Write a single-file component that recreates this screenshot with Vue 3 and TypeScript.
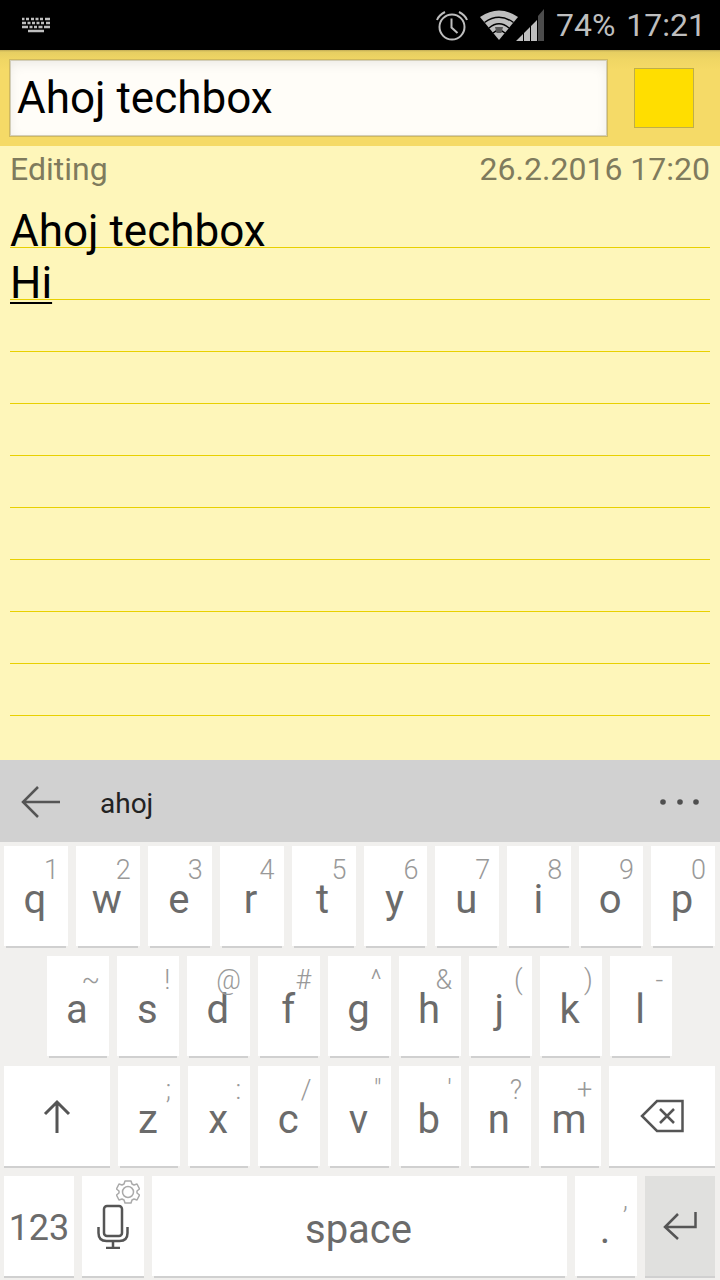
<script setup lang="ts">
import { ref } from 'vue'

interface Key {
  label: string
  hint: string
}

const toKeys = (letters: string, hints: string): Key[] =>
  [...letters].map((label, i) => ({ label, hint: hints[i] }))

const topRow = toKeys('qwertyuiop', '1234567890')
const homeRow = toKeys('asdfghjkl', '~!@#^&()-')
const lowRow = toKeys('zxcvbnm', ';:/"\'?+')

const title = ref('Ahoj techbox')
</script>

<template>
  <div class="screen">
    <header class="status">
      <svg class="status-keyboard" width="30" height="16" viewBox="0 0 30 16" aria-hidden="true">
        <g stroke="#bebebe" stroke-width="2.500">
          <path d="M1 2h2.500M5 2h3M10 2h3M14.500 2h3M19 2h3M24 2h5" />
          <path d="M1 6h4M6.500 6h3M11 6h3M15.500 6h3M20 6h3M25 6h4" />
          <path d="M1 10h6M8.500 10h3M13 10h3M17.500 10h4M23 10h6" />
          <path d="M7 14h16" />
        </g>
      </svg>
      <div class="status-right">
        <svg width="32" height="32" viewBox="0 0 32 32" fill="none" stroke="#bebebe" stroke-width="2" aria-hidden="true">
          <circle cx="16" cy="18" r="12.500" />
          <path d="M15.500 9.500v9l6 5.500M1 11Q3 6 9 3M31 11Q29 6 23 3" />
        </svg>
        <svg class="signal" width="66" height="32" viewBox="0 0 66 32" aria-hidden="true">
          <path d="M1 8Q20-5 39 8L20 31Z" fill="#bebebe" />
          <path d="M5.500 13.500Q20 3 34.500 13.500M10 19Q20 10.500 30 19M14 24Q20 18.500 26 24" fill="none" stroke="#000" stroke-width="1.500" />
          <path d="M16 18h8l-1.500 6h-5z" fill="#555" />
          <path d="M37 32l7-7v7zM45 24l6-6v14h-6zM52 17l6-6v21h-6z" fill="#bebebe" />
          <path d="M59 7l6-7v32h-6z" fill="#4c4c4c" />
        </svg>
        <span>74%</span>
        <time>17:21</time>
      </div>
    </header>

    <div class="title-bar">
      <input v-model="title" class="title" type="text" aria-label="Title" />
      <button class="swatch" type="button" aria-label="Note colour"></button>
    </div>

    <main class="note">
      <div class="meta">
        <span>Editing</span>
        <time>26.2.2016 17:20</time>
      </div>
      <div class="paper" contenteditable="true" role="textbox" aria-multiline="true" aria-label="Note text">
        <div>Ahoj techbox</div>
        <div><u>Hi</u></div>
      </div>
    </main>

    <section class="keyboard" aria-label="Keyboard">
      <div class="suggestions">
        <button type="button" class="plain" aria-label="Back">
          <svg width="42" height="32" viewBox="0 0 42 32" fill="none" stroke="#555" stroke-width="2.500" aria-hidden="true">
            <path d="M40 16H3M18 1L3 16l15 15" />
          </svg>
        </button>
        <button type="button" class="plain word">ahoj</button>
        <button type="button" class="plain more" aria-label="More">
          <svg width="40" height="6" viewBox="0 0 40 6" fill="#4f4f4f" aria-hidden="true">
            <circle cx="3" cy="3" r="2.800" /><circle cx="20" cy="3" r="2.800" /><circle cx="36" cy="3" r="2.800" />
          </svg>
        </button>
      </div>

      <div class="rows">
        <div class="row top">
          <button v-for="k in topRow" :key="k.label" type="button" class="key">
            <span class="hint">{{ k.hint }}</span>{{ k.label }}
          </button>
        </div>
        <div class="row home">
          <button v-for="k in homeRow" :key="k.label" type="button" class="key">
            <span class="hint">{{ k.hint }}</span>{{ k.label }}
          </button>
        </div>
        <div class="row low">
          <button type="button" class="key wide" aria-label="Shift">
            <svg width="28" height="34" viewBox="0 0 28 34" fill="none" stroke="#555" stroke-width="3" aria-hidden="true">
              <path d="M14 34V3M2 15L14 3l12 12" />
            </svg>
          </button>
          <button v-for="k in lowRow" :key="k.label" type="button" class="key">
            <span class="hint">{{ k.hint }}</span>{{ k.label }}
          </button>
          <button type="button" class="key wide" aria-label="Backspace">
            <svg width="44" height="34" viewBox="0 0 44 34" fill="none" stroke="#555" stroke-width="2.500" aria-hidden="true">
              <path d="M17 2h25.500v30H17L2 17zM20 10l14 14M34 10L20 24" />
            </svg>
          </button>
        </div>
        <div class="row bottom">
          <button type="button" class="key wide digits">123</button>
          <button type="button" class="key wide" aria-label="Voice input">
            <svg class="gear" width="24" height="24" viewBox="0 0 24 24" fill="none" stroke="#aaa" stroke-width="1.500" aria-hidden="true">
              <circle cx="12" cy="12" r="5.500" />
              <path d="M9 1h6l1 3 2 1 3-1 2.500 5-2.500 2v2l2.500 2-2.500 5-3-1-2 1-1 3H9l-1-3-2-1-3 1-2.500-5L3 13v-2L.5 9 3 4l3 1 2-1z" stroke-linejoin="round" />
            </svg>
            <svg width="32" height="46" viewBox="0 0 32 46" fill="none" stroke="#555" stroke-width="2.500" aria-hidden="true">
              <rect x="7" y="3" width="18" height="30" rx="3" />
              <path d="M1.500 24v6q0 8 8 8h13q8 0 8-8v-6M16 38v6M9 45h14" />
            </svg>
          </button>
          <button type="button" class="key space">space</button>
          <button type="button" class="key"><span class="hint">,</span>.</button>
          <button type="button" class="key wide enter" aria-label="Enter">
            <svg width="34" height="28" viewBox="0 0 34 28" fill="none" stroke="#555" stroke-width="2.500" aria-hidden="true">
              <path d="M32.500 0v15H2M15 2L2 15l13 12" />
            </svg>
          </button>
        </div>
      </div>
    </section>
  </div>
</template>

<style>
body {
  margin: 0;
  background: #f1f0ee;
}
</style>

<style scoped>
.screen {
  display: flex;
  flex-direction: column;
  min-height: 100vh;
  font-family: Roboto, "Noto Sans", sans-serif;
  color: #000;
}

.status {
  display: flex;
  justify-content: space-between;
  align-items: center;
  height: 50px;
  padding: 0 14px 0 21px;
  background: #000;
  color: #bebebe;
  font-size: 32px;
  line-height: 52px;
}

.status-right {
  display: flex;
  align-items: center;
  gap: 11px;
}

.title-bar {
  display: flex;
  align-items: center;
  gap: 26px;
  height: 96px;
  box-sizing: border-box;
  padding: 0 26px 0 9px;
  background: linear-gradient(#bfa955, #e6ce62 2px, #f0d664 10px, #f5da67 20px);
}

.title {
  flex: 1;
  min-width: 0;
  height: 78px;
  box-sizing: border-box;
  padding: 0 7px;
  border: 1px solid #d0b95f;
  border-radius: 0;
  background: #fffdf8;
  box-shadow: inset 0 0 0 1px #d3ceb8, inset 0 4px 12px rgba(0, 0, 0, 0.08);
  color: #000;
  font: 44px Roboto, "Noto Sans", sans-serif;
  outline: none;
}

.swatch {
  width: 60px;
  height: 60px;
  padding: 0;
  border: 1px solid #bfae4a;
  background: #ffde00;
}

.note {
  flex: 1;
  padding: 0 10px;
  background: #fef6ba;
}

.meta {
  display: flex;
  justify-content: space-between;
  color: #7f7b5d;
  font-size: 32px;
  line-height: 46px;
}

.paper {
  height: 524px;
  padding-top: 13px;
  box-sizing: border-box;
  background: repeating-linear-gradient(transparent 0 51px, #e8d000 51px 52px) 0 4px / 100% 520px no-repeat;
  font-size: 44px;
  line-height: 52px;
  outline: none;
}

.paper u {
  text-decoration-thickness: 2px;
  text-underline-offset: 4px;
}

.suggestions {
  display: flex;
  align-items: center;
  height: 82px;
  box-sizing: border-box;
  padding: 2px 20px 0;
  background: #d1d1d1;
}

.plain {
  display: flex;
  padding: 0;
  border: 0;
  background: none;
}

.word {
  margin-left: 38px;
  padding-top: 4px;
  color: #222;
  font: 28px/40px Roboto, "Noto Sans", sans-serif;
}

.more {
  margin-left: auto;
}

.rows {
  display: grid;
  gap: 10px;
  padding: 4px 5px 4px 4px;
  background: #f1f0ee;
}

.row {
  display: grid;
  gap: 8px;
}

.top {
  grid-template-columns: repeat(10, 1fr);
}

.home {
  grid-template-columns: repeat(9, 1fr);
  padding: 0 6%;
}

.low {
  grid-template-columns: 17fr repeat(7, 10fr) 17fr;
}

.bottom {
  grid-template-columns: 70fr 62fr 415fr 62fr 70fr;
}

.key {
  position: relative;
  display: flex;
  justify-content: center;
  align-items: center;
  min-width: 0;
  height: 100px;
  padding: 8px 2px 0 0;
  border: 0;
  background: #fff;
  color: #6b6b6b;
  font: 40px/48px Roboto, "Noto Sans", sans-serif;
}

.key::after {
  content: "";
  position: absolute;
  inset: 100% 2px auto;
  height: 2px;
  background: #d0d0d0;
}

.wide {
  padding: 0;
}

.wide::after {
  inset: 100% 0 auto;
}

.hint {
  position: absolute;
  top: 8px;
  right: 9px;
  color: #999;
  font-size: 27px;
  font-weight: 300;
  line-height: 32px;
}

.digits {
  padding-top: 4px;
  font-size: 36px;
}

.gear {
  position: absolute;
  top: 4px;
  right: 4px;
}

.enter {
  background: #e0e0de;
}
</style>
